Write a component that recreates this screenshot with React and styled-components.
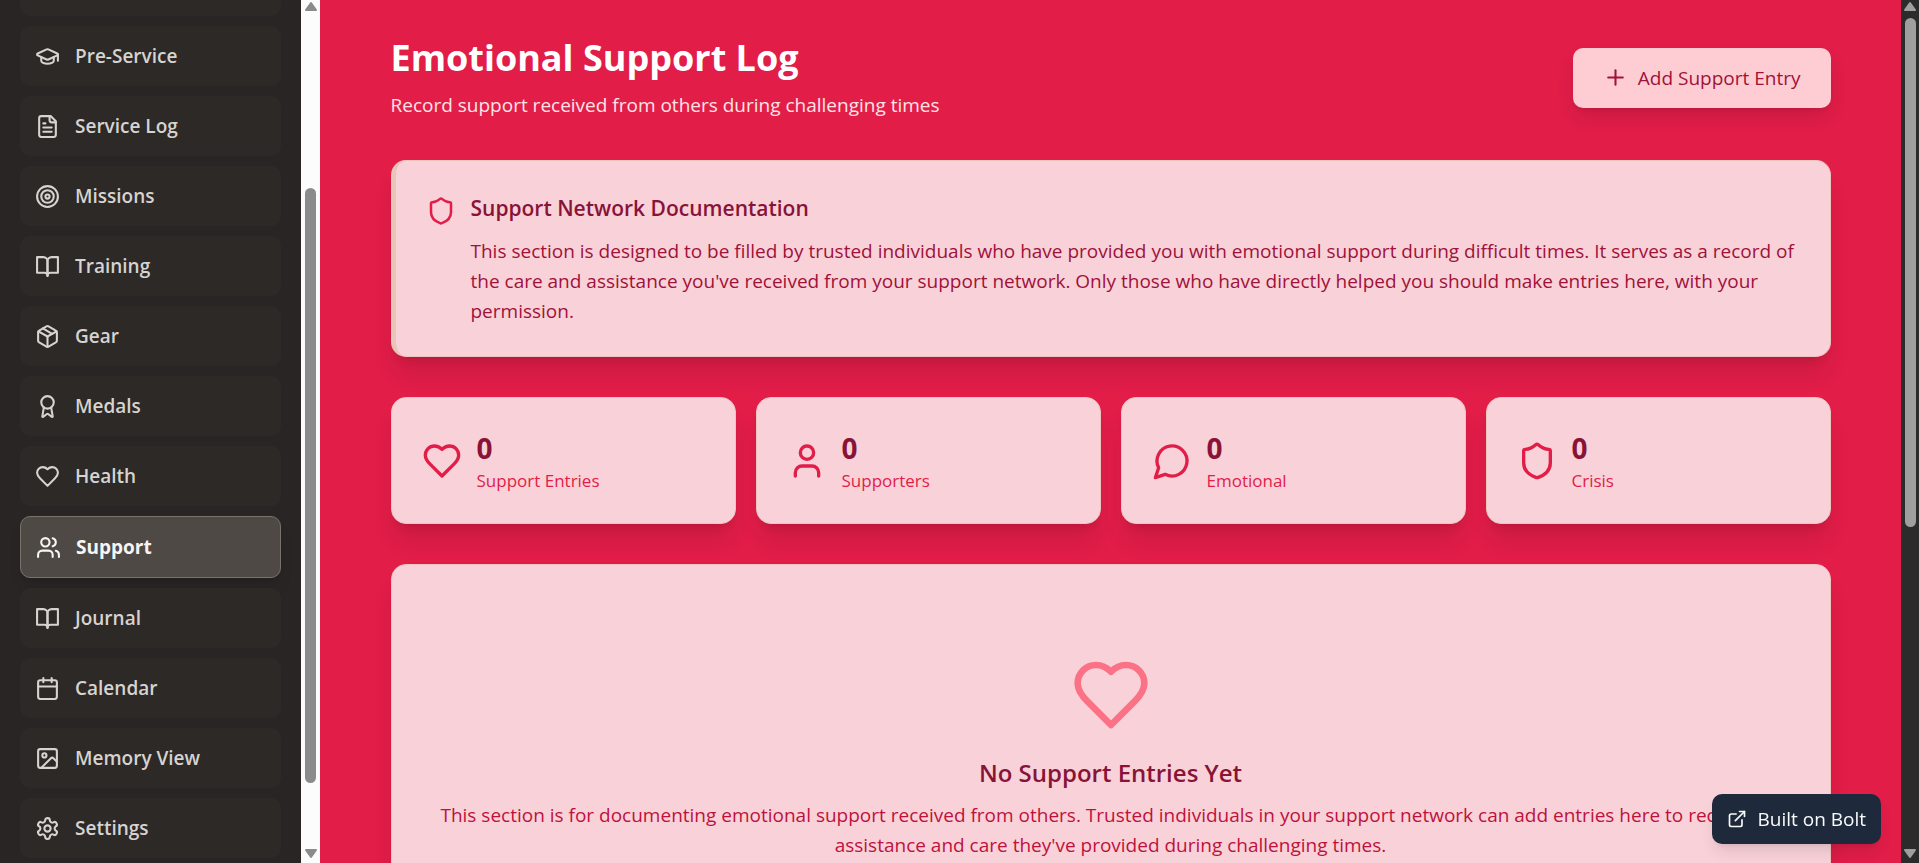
import React from 'react';
import styled, { createGlobalStyle } from 'styled-components';

const GlobalStyle = createGlobalStyle`
  * {
    box-sizing: border-box;
    margin: 0;
    padding: 0;
  }
  body {
    font-family: 'Segoe UI', 'Open Sans', 'Noto Sans', sans-serif;
    font-size: 19px;
    line-height: 30px;
    overflow: hidden;
  }
  button {
    font: inherit;
    border: none;
    cursor: pointer;
  }
  a {
    color: inherit;
    text-decoration: none;
  }
`;

const ICONS = {
  graduation: (
    <>
      <path d="M21.42 10.922a1 1 0 0 0-.019-1.838L12.83 5.18a2 2 0 0 0-1.66 0L2.6 9.08a1 1 0 0 0 0 1.832l8.57 3.908a2 2 0 0 0 1.66 0z" />
      <path d="M22 10v6" />
      <path d="M6 12.5V16a6 3 0 0 0 12 0v-3.5" />
    </>
  ),
  file: (
    <>
      <path d="M15 2H6a2 2 0 0 0-2 2v16a2 2 0 0 0 2 2h12a2 2 0 0 0 2-2V7Z" />
      <path d="M14 2v4a2 2 0 0 0 2 2h4" />
      <path d="M10 9H8" />
      <path d="M16 13H8" />
      <path d="M16 17H8" />
    </>
  ),
  target: (
    <>
      <circle cx="12" cy="12" r="10" />
      <circle cx="12" cy="12" r="6" />
      <circle cx="12" cy="12" r="2" />
    </>
  ),
  book: (
    <>
      <path d="M2 3h6a4 4 0 0 1 4 4v14a3 3 0 0 0-3-3H2z" />
      <path d="M22 3h-6a4 4 0 0 0-4 4v14a3 3 0 0 1 3-3h7z" />
    </>
  ),
  package: (
    <>
      <path d="m7.5 4.27 9 5.15" />
      <path d="M21 8a2 2 0 0 0-1-1.73l-7-4a2 2 0 0 0-2 0l-7 4A2 2 0 0 0 3 8v8a2 2 0 0 0 1 1.73l7 4a2 2 0 0 0 2 0l7-4A2 2 0 0 0 21 16Z" />
      <path d="m3.3 7 8.7 5 8.7-5" />
      <path d="M12 22V12" />
    </>
  ),
  award: (
    <>
      <path d="m15.477 12.89 1.515 8.526a.5.5 0 0 1-.81.47l-3.58-2.687a1 1 0 0 0-1.197 0l-3.586 2.686a.5.5 0 0 1-.81-.469l1.514-8.526" />
      <circle cx="12" cy="8" r="6" />
    </>
  ),
  heart: (
    <path d="M19 14c1.49-1.46 3-3.21 3-5.5A5.5 5.5 0 0 0 16.5 3c-1.76 0-3 .5-4.5 2-1.5-1.5-2.74-2-4.5-2A5.5 5.5 0 0 0 2 8.5c0 2.3 1.5 4.05 3 5.5l7 7Z" />
  ),
  users: (
    <>
      <path d="M16 21v-2a4 4 0 0 0-4-4H6a4 4 0 0 0-4 4v2" />
      <circle cx="9" cy="7" r="4" />
      <path d="M22 21v-2a4 4 0 0 0-3-3.87" />
      <path d="M16 3.13a4 4 0 0 1 0 7.75" />
    </>
  ),
  calendar: (
    <>
      <path d="M8 2v4" />
      <path d="M16 2v4" />
      <rect width="18" height="18" x="3" y="4" rx="2" />
      <path d="M3 10h18" />
    </>
  ),
  image: (
    <>
      <rect width="18" height="18" x="3" y="3" rx="2" />
      <circle cx="9" cy="9" r="2" />
      <path d="m21 15-3.086-3.086a2 2 0 0 0-2.828 0L6 21" />
    </>
  ),
  settings: (
    <>
      <path d="M12.22 2h-.44a2 2 0 0 0-2 2v.18a2 2 0 0 1-1 1.73l-.43.25a2 2 0 0 1-2 0l-.15-.08a2 2 0 0 0-2.73.73l-.22.38a2 2 0 0 0 .73 2.73l.15.1a2 2 0 0 1 1 1.72v.51a2 2 0 0 1-1 1.74l-.15.09a2 2 0 0 0-.73 2.73l.22.38a2 2 0 0 0 2.73.73l.15-.08a2 2 0 0 1 2 0l.43.25a2 2 0 0 1 1 1.73V20a2 2 0 0 0 2 2h.44a2 2 0 0 0 2-2v-.18a2 2 0 0 1 1-1.73l.43-.25a2 2 0 0 1 2 0l.15.08a2 2 0 0 0 2.73-.73l.22-.39a2 2 0 0 0-.73-2.73l-.15-.08a2 2 0 0 1-1-1.74v-.5a2 2 0 0 1 1-1.74l.15-.09a2 2 0 0 0 .73-2.73l-.22-.38a2 2 0 0 0-2.73-.73l-.15.08a2 2 0 0 1-2 0l-.43-.25a2 2 0 0 1-1-1.73V4a2 2 0 0 0-2-2z" />
      <circle cx="12" cy="12" r="3" />
    </>
  ),
  plus: (
    <>
      <path d="M5 12h14" />
      <path d="M12 5v14" />
    </>
  ),
  shield: (
    <path d="M20 13c0 5-3.5 7.5-7.66 8.95a1 1 0 0 1-.67-.01C7.5 20.5 4 18 4 13V6a1 1 0 0 1 1-1c2 0 4.5-1.2 6.24-2.72a1.17 1.17 0 0 1 1.52 0C14.51 3.81 17 5 19 5a1 1 0 0 1 1 1z" />
  ),
  user: (
    <>
      <path d="M19 21v-2a4 4 0 0 0-4-4H9a4 4 0 0 0-4 4v2" />
      <circle cx="12" cy="7" r="4" />
    </>
  ),
  message: <path d="M7.9 20A9 9 0 1 0 4 16.1L2 22Z" />,
  external: (
    <>
      <path d="M15 3h6v6" />
      <path d="M10 14 21 3" />
      <path d="M18 13v6a2 2 0 0 1-2 2H5a2 2 0 0 1-2-2V8a2 2 0 0 1 2-2h6" />
    </>
  ),
};

const Svg = styled.svg`
  flex-shrink: 0;
  fill: none;
  stroke: currentColor;
  stroke-width: 2;
  stroke-linecap: round;
  stroke-linejoin: round;
`;

function Icon({ name, size }) {
  return (
    <Svg viewBox="0 0 24 24" width={size} height={size} aria-hidden="true">
      {ICONS[name]}
    </Svg>
  );
}

const Page = styled.div`
  display: flex;
  height: 100vh;
  overflow: hidden;
  background-color: #e11d48;
`;

const Sidebar = styled.aside`
  display: flex;
  flex: 0 0 320px;
  background-color: #292524;
`;

const Nav = styled.nav`
  flex: 1;
  display: flex;
  flex-direction: column;
  justify-content: flex-end;
  gap: 10px;
  padding: 0 20px 5px;
  overflow: hidden;
`;

const NavItem = styled.a`
  flex: 0 0 auto;
  display: flex;
  align-items: center;
  gap: 15px;
  min-height: 60px;
  padding: 15px;
  border-radius: 10px;
  color: #d6d3d1;
  background-color: #2d2926;
  font-weight: 600;
  ${({ $active }) =>
    $active &&
    `
    color: #f5f5f4;
    background-color: #4e4944;
    border: 1px solid #78716c;
    font-weight: 700;
    box-shadow: 0 10px 15px -3px rgba(0, 0, 0, 0.1), 0 4px 6px -4px rgba(0, 0, 0, 0.1);
  `}
`;

const Scrollbar = styled.div`
  flex: 0 0 ${({ $width }) => $width}px;
  display: flex;
  flex-direction: column;
  align-items: center;
  color: ${({ $thumb }) => $thumb};
  background-color: ${({ $track }) => $track};
`;

const Arrow = styled.svg`
  flex: 0 0 18px;
  fill: currentColor;
  stroke: currentColor;
  stroke-width: 2;
  stroke-linejoin: round;
`;

const Space = styled.div`
  flex: ${({ $grow }) => $grow} 1 0;
`;

const Thumb = styled(Space)`
  width: 11px;
  border-radius: 6px;
  background-color: currentColor;
`;

function ScrollRail({ width, track, thumb, before, size, after }) {
  return (
    <Scrollbar $width={width} $track={track} $thumb={thumb} aria-hidden="true">
      <Arrow viewBox="0 0 18 18" width="18" height="18">
        <path d="M4 10 9 3 14 10Z" />
      </Arrow>
      <Space $grow={before} />
      <Thumb $grow={size} />
      <Space $grow={after} />
      <Arrow viewBox="0 0 18 18" width="18" height="18">
        <path d="M4 5 9 12 14 5Z" />
      </Arrow>
    </Scrollbar>
  );
}

const Main = styled.main`
  flex: 1;
  min-width: 0;
  padding: 35px 40px;
  overflow: hidden;
`;

const Content = styled.div`
  max-width: 1440px;
  margin: 0 auto;
  display: flex;
  flex-direction: column;
  gap: 40px;
`;

const Header = styled.header`
  display: flex;
  align-items: center;
  justify-content: space-between;
`;

const Title = styled.h1`
  color: #fff;
  font-size: 36px;
  line-height: 45px;
  font-weight: 700;
`;

const Subtitle = styled.p`
  margin-top: 10px;
  color: #ffe4e6;
  font-weight: 500;
`;

const AddButton = styled.button`
  display: flex;
  align-items: center;
  gap: 10px;
  padding: 15px 30px;
  border-radius: 10px;
  color: #9f1239;
  background-color: #fecdd3;
  box-shadow: 0 10px 20px -3px rgba(0, 0, 0, 0.12), 0 4px 6px -4px rgba(0, 0, 0, 0.1);
`;

const Card = styled.section`
  padding: 30px;
  border: 1px solid #ecc5bf;
  border-radius: 15px;
  background-color: #f9d1d9;
  box-shadow: 0 20px 25px -5px rgba(0, 0, 0, 0.1), 0 8px 10px -6px rgba(0, 0, 0, 0.1);
`;

const InfoCard = styled(Card)`
  display: flex;
  gap: 15px;
  border-left: 5px solid #e8c4b9;
`;

const InfoIcon = styled.div`
  padding-top: 5px;
  line-height: 0;
  color: #e11d48;
`;

const InfoTitle = styled.h2`
  margin-bottom: 10px;
  color: #881337;
  font-size: 21px;
  line-height: 35px;
  font-weight: 600;
`;

const InfoText = styled.p`
  color: #9f1239;
`;

const Stats = styled.div`
  display: grid;
  grid-template-columns: repeat(4, 1fr);
  gap: 20px;
`;

const StatCard = styled(Card)`
  display: flex;
  align-items: center;
  gap: 15px;
  color: #e11d48;
`;

const StatValue = styled.p`
  color: #881337;
  font-size: 28px;
  line-height: 40px;
  font-weight: 700;
`;

const StatLabel = styled.p`
  font-size: 17px;
  line-height: 25px;
`;

const EmptyCard = styled(Card)`
  display: flex;
  flex-direction: column;
  align-items: center;
  padding: 90px 30px;
  color: #fb7185;
  text-align: center;
`;

const EmptyTitle = styled.h2`
  margin: 20px 0 10px;
  color: #881337;
  font-size: 24px;
  line-height: 35px;
  font-weight: 600;
`;

const EmptyText = styled.p`
  color: #be123c;
`;

const BoltBadge = styled.a`
  position: fixed;
  right: 38px;
  bottom: 19px;
  display: flex;
  align-items: center;
  gap: 10px;
  padding: 10px 15px;
  border-radius: 10px;
  color: #f8fafc;
  background-color: #1e293b;
  font-weight: 500;
  box-shadow: 0 10px 15px -3px rgba(0, 0, 0, 0.1), 0 4px 6px -4px rgba(0, 0, 0, 0.1);
`;

const navItems = [
  { label: 'Pre-Service', icon: 'graduation' },
  { label: 'Service Log', icon: 'file' },
  { label: 'Missions', icon: 'target' },
  { label: 'Training', icon: 'book' },
  { label: 'Gear', icon: 'package' },
  { label: 'Medals', icon: 'award' },
  { label: 'Health', icon: 'heart' },
  { label: 'Support', icon: 'users', active: true },
  { label: 'Journal', icon: 'book' },
  { label: 'Calendar', icon: 'calendar' },
  { label: 'Memory View', icon: 'image' },
  { label: 'Settings', icon: 'settings' },
];

const stats = [
  { label: 'Support Entries', icon: 'heart', value: 0 },
  { label: 'Supporters', icon: 'user', value: 0 },
  { label: 'Emotional', icon: 'message', value: 0 },
  { label: 'Crisis', icon: 'shield', value: 0 },
];

function App() {
  return (
    <>
      <GlobalStyle />
      <Page>
        <Sidebar>
          <Nav>
            <NavItem as="div" />
            {navItems.map(({ label, icon, active }) => (
              <NavItem key={label} href="#" $active={active}>
                <Icon name={icon} size={25} />
                {label}
              </NavItem>
            ))}
          </Nav>
          <ScrollRail width={19} track="#fcfcfc" thumb="#8b8b8b" before={170} size={595} after={62} />
        </Sidebar>
        <Main>
          <Content>
            <Header>
              <div>
                <Title>Emotional Support Log</Title>
                <Subtitle>Record support received from others during challenging times</Subtitle>
              </div>
              <AddButton type="button">
                <Icon name="plus" size={25} />
                Add Support Entry
              </AddButton>
            </Header>
            <InfoCard>
              <InfoIcon>
                <Icon name="shield" size={30} />
              </InfoIcon>
              <div>
                <InfoTitle>Support Network Documentation</InfoTitle>
                <InfoText>
                  This section is designed to be filled by trusted individuals who have provided you
                  with emotional support during difficult times. It serves as a record of the care
                  and assistance you've received from your support network. Only those who have
                  directly helped you should make entries here, with your permission.
                </InfoText>
              </div>
            </InfoCard>
            <Stats>
              {stats.map(({ label, icon, value }) => (
                <StatCard as="div" key={label}>
                  <Icon name={icon} size={40} />
                  <div>
                    <StatValue>{value}</StatValue>
                    <StatLabel>{label}</StatLabel>
                  </div>
                </StatCard>
              ))}
            </Stats>
            <EmptyCard>
              <Icon name="heart" size={80} />
              <EmptyTitle>No Support Entries Yet</EmptyTitle>
              <EmptyText>
                This section is for documenting emotional support received from others. Trusted
                individuals in your support network can add entries here to record the assistance
                and care they've provided during challenging times.
              </EmptyText>
            </EmptyCard>
          </Content>
        </Main>
        <ScrollRail width={18} track="#2b2b2b" thumb="#9f9f9f" before={0} size={509} after={318} />
      </Page>
      <BoltBadge href="#">
        <Icon name="external" size={20} />
        Built on Bolt
      </BoltBadge>
    </>
  );
}

export default App;
